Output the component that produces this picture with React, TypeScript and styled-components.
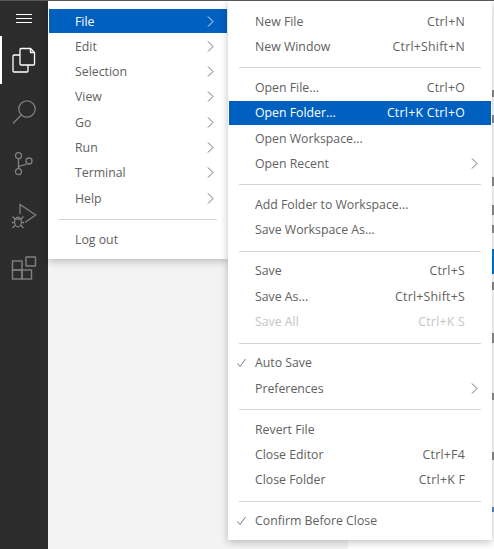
import React from 'react';
import styled, { createGlobalStyle } from 'styled-components';

const GlobalStyle = createGlobalStyle`
  html, body {
    margin: 0;
    padding: 0;
    height: 100%;
    overflow: hidden;
    background: #fff;
  }
  #root {
    height: 100%;
  }
`;

type Entry =
  | { kind: 'sep' }
  | { kind: 'item'; label: string; keys?: string; more?: boolean; active?: boolean; disabled?: boolean; checked?: boolean };

const sep: Entry = { kind: 'sep' };
const item = (label: string, rest: Partial<Extract<Entry, { kind: 'item' }>> = {}): Entry => ({ kind: 'item', label, ...rest });

const mainMenu: Entry[] = [
  item('File', { more: true, active: true }),
  item('Edit', { more: true }),
  item('Selection', { more: true }),
  item('View', { more: true }),
  item('Go', { more: true }),
  item('Run', { more: true }),
  item('Terminal', { more: true }),
  item('Help', { more: true }),
  sep,
  item('Log out'),
];

const fileMenu: Entry[] = [
  item('New File', { keys: 'Ctrl+N' }),
  item('New Window', { keys: 'Ctrl+Shift+N' }),
  sep,
  item('Open File...', { keys: 'Ctrl+O' }),
  item('Open Folder...', { keys: 'Ctrl+K Ctrl+O', active: true }),
  item('Open Workspace...'),
  item('Open Recent', { more: true }),
  sep,
  item('Add Folder to Workspace...'),
  item('Save Workspace As...'),
  sep,
  item('Save', { keys: 'Ctrl+S' }),
  item('Save As...', { keys: 'Ctrl+Shift+S' }),
  item('Save All', { keys: 'Ctrl+K S', disabled: true }),
  sep,
  item('Auto Save', { checked: true }),
  item('Preferences', { more: true }),
  sep,
  item('Revert File'),
  item('Close Editor', { keys: 'Ctrl+F4' }),
  item('Close Folder', { keys: 'Ctrl+K F' }),
  sep,
  item('Confirm Before Close', { checked: true }),
];

// bits of the page behind the menu that stick out at the right edge
const peeks = [
  { top: 89, height: 7 },
  { top: 114, height: 8 },
  { top: 176, height: 9 },
  { top: 204, height: 10 },
  { top: 224, height: 8 },
  { top: 281, height: 8 },
  { top: 332, height: 10 },
  { top: 392, height: 7 },
  { top: 451, height: 8 },
  { top: 506, height: 5, blue: true },
];

const Shell = styled.div`
  position: relative;
  display: flex;
  width: 494px;
  height: 549px;
  overflow: hidden;
  border-top: 1px solid #5a5a5a;
  box-sizing: border-box;
  font-family: 'Open Sans', 'Noto Sans', sans-serif;
`;

const ActivityBar = styled.nav`
  width: 48px;
  flex: none;
  background: #2c2c2c;
  display: flex;
  flex-direction: column;
  align-items: stretch;
  gap: 4px;
`;

const MenuToggle = styled.div`
  height: 26px;
  padding-top: 5px;
  display: flex;
  align-items: center;
  justify-content: center;
`;

const ActivityIcon = styled.div<{ $active?: boolean }>`
  height: 48px;
  display: flex;
  align-items: center;
  justify-content: center;
  box-sizing: border-box;
  color: ${p => (p.$active ? '#ffffff' : '#808080')};
  border-left: 2px solid ${p => (p.$active ? '#ffffff' : 'transparent')};
  padding-right: 2px;
`;

const SideBar = styled.div`
  width: 300px;
  flex: none;
  background: #f3f3f3;
`;

const Editor = styled.div`
  flex: 1;
  background: #ffffff;
  position: relative;
`;

const PeekBlue = styled.div`
  position: absolute;
  right: 0;
  top: 248px;
  width: 2px;
  height: 25px;
  background: #0078d4;
`;

const PeekText = styled.div<{ $top: number; $height: number; $blue?: boolean }>`
  position: absolute;
  right: 0;
  top: ${p => p.$top}px;
  width: 2px;
  height: ${p => p.$height}px;
  background: ${p => (p.$blue ? '#4a90d8' : '#8f8f8f')};
`;

const Menu = styled.ul<{ $left: number; $width: number }>`
  position: absolute;
  top: 0;
  left: ${p => p.$left}px;
  width: ${p => p.$width}px;
  box-sizing: border-box;
  margin: 0;
  padding: 8px 1px 6px;
  list-style: none;
  background: #ffffff;
  box-shadow: 0 2px 8px rgba(0, 0, 0, 0.25);
  color: #616161;
  font-size: 12.3px;
`;

const Row = styled.li<{ $active?: boolean; $disabled?: boolean }>`
  position: relative;
  display: flex;
  align-items: center;
  justify-content: space-between;
  height: 24px;
  margin-bottom: 1.33px;
  padding: 0 26px;
  white-space: nowrap;
  background: ${p => (p.$active ? '#0060c0' : 'transparent')};
  color: ${p => (p.$active ? '#ffffff' : p.$disabled ? '#c4c4c4' : '#616161')};
`;

const Keys = styled.span`
  margin-left: 24px;
  letter-spacing: 0.25px;
`;

const More = styled.svg`
  flex: none;
  width: 7px;
  height: 11px;
  margin-right: -12.5px;
  fill: none;
  stroke: currentColor;
  stroke-width: 1;
  opacity: 0.9;
`;

const Tick = styled.svg`
  position: absolute;
  left: 8px;
  top: 7px;
  width: 9px;
  height: 10px;
  fill: none;
  stroke: #7a7a7a;
  stroke-width: 1;
`;

const Divider = styled.li`
  height: 1px;
  margin: 9px 10px 7.1px;
  background: #d4d4d4;
`;

function MenuList({ entries, left, width }: { entries: Entry[]; left: number; width: number }) {
  return (
    <Menu $left={left} $width={width}>
      {entries.map((e, i) => {
        if (e.kind === 'sep') return <Divider key={i} />;
        return (
          <Row key={i} $active={e.active} $disabled={e.disabled}>
            {e.checked && (
              <Tick viewBox="0 0 9 10">
                <path d="M.5 5.5 3 8.5 8.5 1" />
              </Tick>
            )}
            <span>{e.label}</span>
            {e.keys && <Keys>{e.keys}</Keys>}
            {e.more && (
              <More viewBox="0 0 7 11">
                <path d="M1 .5 6 5.5 1 10.5" />
              </More>
            )}
          </Row>
        );
      })}
    </Menu>
  );
}

export default function App() {
  return (
    <>
      <GlobalStyle />
      <Shell>
        <ActivityBar>
          <MenuToggle>
            <svg width="16" height="10" viewBox="0 0 16 10" fill="none" stroke="#ffffff" strokeWidth="1">
              <path d="M0 .5h16M0 4.5h16M0 8.5h16" />
            </svg>
          </MenuToggle>
          <ActivityIcon $active>
            <svg width="24" height="26" viewBox="0 0 24 26" fill="none" stroke="currentColor" strokeWidth="1.3">
              <path d="M8 8H2a1 1 0 0 0-1 1v15a1 1 0 0 0 1 1h13a1 1 0 0 0 1-1v-6" />
              <path d="M9 1.5h9.5l4 4V17a1 1 0 0 1-1 1H9a1 1 0 0 1-1-1V2.5a1 1 0 0 1 1-1z" />
              <path d="M18.5 1.5v4h4" />
            </svg>
          </ActivityIcon>
          <ActivityIcon>
            <svg width="24" height="30" viewBox="0 0 24 30" fill="none" stroke="currentColor" strokeWidth="1.3">
              <circle cx="15" cy="12" r="8.2" />
              <path d="M9.2 18 1 26.5" />
            </svg>
          </ActivityIcon>
          <ActivityIcon>
            <svg width="20" height="26" viewBox="0 0 20 26" fill="none" stroke="currentColor" strokeWidth="1.3">
              <circle cx="4.5" cy="4.7" r="3" />
              <circle cx="4.5" cy="20.7" r="3" />
              <circle cx="15" cy="10" r="3" />
              <path d="M4.5 7.7v10M4.5 17.5c0-2.5 2-3 4-3.2 2-.2 3.5-.8 4.4-2" />
            </svg>
          </ActivityIcon>
          <ActivityIcon>
            <svg width="26" height="26" viewBox="0 0 26 26" fill="none" stroke="currentColor" strokeWidth="1.3">
              <path d="M9 11V1.5L24.7 12 14 19.5" />
              <ellipse cx="7" cy="19" rx="3.4" ry="4.8" />
              <path d="M3.6 16h6.8M1.5 13.5l2.5 2.5M12.5 13.5 10 16M1 19.5h2.6M10.4 19.5H13M1.5 25 4 22.5M12.5 25 10 22.5" />
            </svg>
          </ActivityIcon>
          <ActivityIcon>
            <svg width="26" height="26" viewBox="0 0 26 26" fill="none" stroke="currentColor" strokeWidth="1.4">
              <rect x="1.5" y="6" width="9.5" height="9" />
              <rect x="1.5" y="15" width="9.5" height="9" />
              <rect x="11" y="15" width="9.5" height="9" />
              <rect x="15" y="2" width="9.5" height="9" rx="0.5" />
            </svg>
          </ActivityIcon>
        </ActivityBar>
        <SideBar />
        <Editor>
          {peeks.map(p => (
            <PeekText key={p.top} $top={p.top} $height={p.height} $blue={p.blue} />
          ))}
          <PeekBlue />
        </Editor>
        <MenuList entries={mainMenu} left={48} width={180} />
        <MenuList entries={fileMenu} left={228} width={264} />
      </Shell>
    </>
  );
}
